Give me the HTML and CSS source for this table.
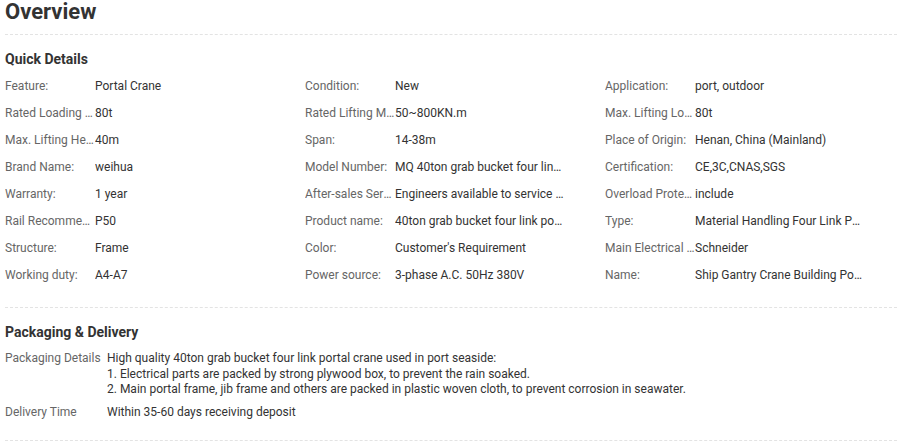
FILE: index.html
```html
<!DOCTYPE html>
<html>
<head>
<meta charset="utf-8">
<link rel="stylesheet" href="styles.css">
</head>
<body>
<div class="overview">
  <h1 class="title">Overview</h1>
  <section class="block">
    <h2 class="block-title">Quick Details</h2>
    <div class="details">
      <div class="item"><span class="label">Feature:</span><span class="value">Portal Crane</span></div>
      <div class="item"><span class="label">Condition:</span><span class="value">New</span></div>
      <div class="item"><span class="label">Application:</span><span class="value">port, outdoor</span></div>

      <div class="item"><span class="label">Rated Loading Capacity:</span><span class="value">80t</span></div>
      <div class="item"><span class="label">Rated Lifting Moment:</span><span class="value">50~800KN.m</span></div>
      <div class="item"><span class="label">Max. Lifting Load:</span><span class="value">80t</span></div>

      <div class="item"><span class="label">Max. Lifting Height:</span><span class="value">40m</span></div>
      <div class="item"><span class="label">Span:</span><span class="value">14-38m</span></div>
      <div class="item"><span class="label">Place of Origin:</span><span class="value">Henan, China (Mainland)</span></div>

      <div class="item"><span class="label">Brand Name:</span><span class="value">weihua</span></div>
      <div class="item"><span class="label">Model Number:</span><span class="value">MQ 40ton grab bucket four link portal crane</span></div>
      <div class="item"><span class="label">Certification:</span><span class="value">CE,3C,CNAS,SGS</span></div>

      <div class="item"><span class="label">Warranty:</span><span class="value">1 year</span></div>
      <div class="item"><span class="label">After-sales Service Provided:</span><span class="value">Engineers available to service machinery overseas</span></div>
      <div class="item"><span class="label">Overload Protection:</span><span class="value">include</span></div>

      <div class="item"><span class="label">Rail Recommended:</span><span class="value">P50</span></div>
      <div class="item"><span class="label">Product name:</span><span class="value">40ton grab bucket four link portal crane</span></div>
      <div class="item"><span class="label">Type:</span><span class="value">Material Handling Four Link Portal Crane</span></div>

      <div class="item"><span class="label">Structure:</span><span class="value">Frame</span></div>
      <div class="item"><span class="label">Color:</span><span class="value">Customer's Requirement</span></div>
      <div class="item"><span class="label">Main Electrical Components:</span><span class="value">Schneider</span></div>

      <div class="item"><span class="label">Working duty:</span><span class="value">A4-A7</span></div>
      <div class="item"><span class="label">Power source:</span><span class="value">3-phase A.C. 50Hz 380V</span></div>
      <div class="item"><span class="label">Name:</span><span class="value">Ship Gantry Crane Building Portal Crane</span></div>
    </div>
  </section>
  <section class="block block-last">
    <h2 class="block-title">Packaging &amp; Delivery</h2>
    <div class="pack">
      <div class="pack-row">
        <span class="pack-label">Packaging Details</span>
        <span class="pack-value">High quality 40ton grab bucket four link portal crane used in port seaside:<br>1. Electrical parts are packed by strong plywood box, to prevent the rain soaked.<br>2. Main portal frame, jib frame and others are packed in plastic woven cloth, to prevent corrosion in seawater.</span>
      </div>
      <div class="pack-row">
        <span class="pack-label">Delivery Time</span>
        <span class="pack-value">Within 35-60 days receiving deposit</span>
      </div>
    </div>
  </section>
</div>
</body>
</html>
```

FILE: styles.css
```css
html, body {
  margin: 0;
  padding: 0;
  background: #fff;
}
body {
  font-family: Roboto, "Liberation Sans", Arial, sans-serif;
  color: #333;
  overflow: hidden;
}
.overview {
  padding-left: 5px;
}
.title {
  margin: 0;
  font-size: 22px;
  line-height: 24px;
  font-weight: 700;
  color: #333;
  padding-bottom: 10px;
  border-bottom: 1px dashed #e3e3e3;
}
.block {
  padding-top: 15px;
  padding-bottom: 18px;
  border-bottom: 1px dashed #e3e3e3;
}
.block-last {
  padding-bottom: 20px;
}
.block-title {
  margin: 0;
  font-size: 14px;
  line-height: 18px;
  font-weight: 700;
  color: #333;
}
.details {
  margin-top: 5px;
  display: grid;
  grid-template-columns: 300px 300px 300px;
  grid-auto-rows: 27px;
  font-size: 12px;
  line-height: 27px;
}
.item {
  display: flex;
  white-space: nowrap;
}
.label {
  width: 90px;
  flex: none;
  overflow: hidden;
  text-overflow: ellipsis;
  color: #666;
}
.value {
  width: 170px;
  flex: none;
  overflow: hidden;
  text-overflow: ellipsis;
  color: #333;
}
.pack {
  margin-top: 10px;
  display: flex;
  flex-direction: column;
  gap: 7px;
  font-size: 12px;
  line-height: 15.5px;
}
.pack-row {
  display: flex;
}
.pack-label {
  width: 102px;
  flex: none;
  color: #666;
}
.pack-value {
  color: #333;
}
```
